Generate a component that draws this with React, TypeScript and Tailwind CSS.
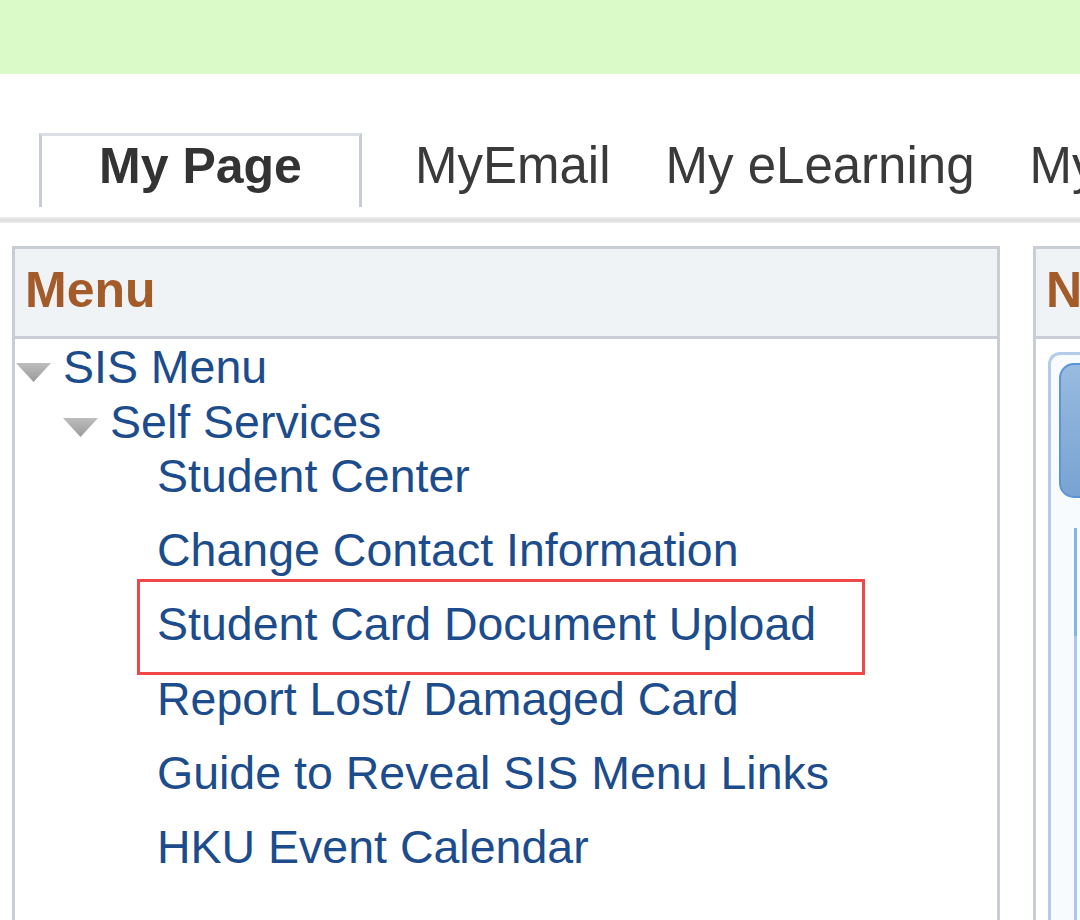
const leaves = [
  "Student Center",
  "Change Contact Information",
  "Student Card Document Upload",
  "Report Lost/ Damaged Card",
  "Guide to Reveal SIS Menu Links",
  "HKU Event Calendar",
];

function Arrow({ className }: { className?: string }) {
  return (
    <svg width="35" height="19" viewBox="0 0 35 19" className={className}>
      <defs>
        <linearGradient id="tri" x1="0" y1="0" x2="0" y2="1">
          <stop offset="0" stopColor="#bdbdbd" />
          <stop offset="1" stopColor="#9a9a9a" />
        </linearGradient>
      </defs>
      <polygon points="0,0 35,0 17.5,19" fill="url(#tri)" />
    </svg>
  );
}

export default function App() {
  return (
    <div className="w-[1080px] h-[920px] overflow-hidden bg-white font-['Liberation_Sans',Arial,sans-serif]">
      {/* top banner */}
      <div className="h-[74px] bg-[#dafbc8]" />

      {/* tab row */}
      <div className="flex items-baseline pt-[59px] pl-[39px] whitespace-nowrap">
        <div className="w-[323px] h-[74px] shrink-0 border-x-[3px] border-t-[3px] border-x-[#c8ccd8] border-t-[#dcdfe6] text-center text-[50px] font-bold text-[#333] leading-[61px]">
          My Page
        </div>
        <div className="ml-[53px] flex shrink-0 gap-[55px] text-[51px] text-[#3a3a3a] leading-[61px]">
          <span>MyEmail</span>
          <span>My eLearning</span>
          <span>My Portal</span>
        </div>
      </div>
      <div className="mt-[10px] h-[6px] bg-linear-to-b from-[#f2f2f2] via-[#dcdcdc] to-[#ededed]" />

      {/* panels */}
      <div className="flex gap-[33px] pl-[12px] pt-[23px]">
        {/* Menu panel */}
        <div className="w-[988px] h-[700px] shrink-0 border-x-[3px] border-t-[3px] border-[#c9cdd6]">
          <div className="h-[90px] bg-[#f0f3f5] border-b-[3px] border-[#c9cdd6] pl-[10px] text-[50px] font-bold text-[#a45b2a] leading-[83px]">
            Menu
          </div>
          <div className="pt-px text-[46.5px] leading-[54.5px] text-[#1c4c8c] whitespace-nowrap">
            <div className="flex items-start">
              <Arrow className="ml-[1px] mt-[23px] mr-[12px] shrink-0" />
              <span>SIS Menu</span>
            </div>
            <div className="flex items-start">
              <Arrow className="ml-[48px] mt-[23px] mr-[12px] shrink-0" />
              <span>Self Services</span>
            </div>
            <ul className="flex flex-col gap-[19.7px] pl-[142px]">
              {leaves.map((item) => (
                <li key={item} className="relative">
                  {item}
                  {item === "Student Card Document Upload" && (
                    <span className="absolute left-[-20px] top-[-18px] w-[728px] h-[96px] border-[3px] border-[#f04848]" />
                  )}
                </li>
              ))}
            </ul>
          </div>
        </div>

        {/* second panel, cut off at the right edge */}
        <div className="w-[400px] h-[700px] shrink-0 border-x-[3px] border-t-[3px] border-[#c9cdd6]">
          <div className="h-[90px] bg-[#f0f3f5] border-b-[3px] border-[#c9cdd6] pl-[10px] text-[50px] font-bold text-[#a45b2a] leading-[83px]">
            News
          </div>
          <div className="ml-[12px] mt-[13px] h-[600px] rounded-tl-[12px] border-l-[3px] border-t-[3px] border-[#b3cde8] bg-[#f8fbfd] pl-[8px] pt-[8px]">
            <div className="h-[135px] rounded-[15px] border-2 border-[#5a95d6] bg-linear-to-b from-[#98bbe0] to-[#78a3d2]" />
            <div className="ml-[15px] mt-[30px] h-[400px] border-l-[3px] border-[#a9c8ea]">
              <div className="h-[108px] -ml-[3px] border-l-[3px] border-[#86b3e6]" />
            </div>
          </div>
        </div>
      </div>
    </div>
  );
}
